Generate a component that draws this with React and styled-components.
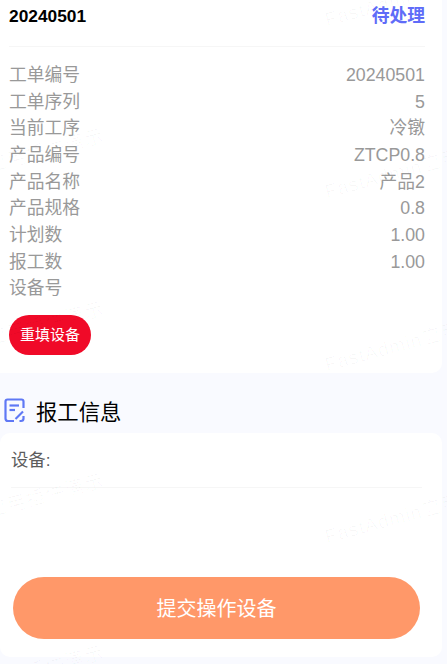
import React from 'react'
import styled, { createGlobalStyle } from 'styled-components'

const GlobalStyle = createGlobalStyle`
  html, body {
    margin: 0;
    padding: 0;
    background: #f9faff;
    overflow: hidden;
  }
  body {
    font-family: "Liberation Sans", "Noto Sans CJK SC", sans-serif;
  }
`

const rows = [
  ['工单编号', '20240501'],
  ['工单序列', '5'],
  ['当前工序', '冷镦'],
  ['产品编号', 'ZTCP0.8'],
  ['产品名称', '产品2'],
  ['产品规格', '0.8'],
  ['计划数', '1.00'],
  ['报工数', '1.00'],
  ['设备号', ''],
]

// watermark is repeated down the page, two columns
const marks = [0, 1, 2, 3, 4].flatMap((i) => [
  { text: 'FastAdmin应用插件演示', left: 328, top: 10 + i * 172.3 },
  { text: 'FastAdmin应用插件演示', left: -106, top: 10 + i * 172.3 },
])

export default function App() {
  return (
    <Page>
      <GlobalStyle />
      <InfoCard>
        <CardHeader>
          <OrderTitle>20240501</OrderTitle>
          <OrderStatus>待处理</OrderStatus>
        </CardHeader>
        <InfoList>
          {rows.map(([label, value]) => (
            <InfoRow key={label}>
              <span>{label}</span>
              <span>{value}</span>
            </InfoRow>
          ))}
        </InfoList>
        <ResetButton>重填设备</ResetButton>
      </InfoCard>

      <SectionHead>
        <svg width="21" height="25" viewBox="0 0 21 25" fill="none" stroke="#5f78f5" strokeWidth="2.2">
          <path d="M10 23H4Q1.500 23 1.500 20.500V3.500Q1.500 1.500 3.500 1.500H17.500Q19.500 1.500 19.500 3.500V10" />
          <path d="M19.500 18V20.500Q19.500 23 17 23H15.500" />
          <path d="M5.500 7.500H15" />
          <path d="M5.500 12H11" />
          <path d="M11.500 21L19 13.500" />
        </svg>
        <SectionTitle>报工信息</SectionTitle>
      </SectionHead>

      <FormCard>
        <FieldRow>设备:</FieldRow>
        <SubmitButton>提交操作设备</SubmitButton>
      </FormCard>

      <Watermarks>
        {marks.map((m) => (
          <Mark key={`${m.left}-${m.top}`} $left={m.left} $top={m.top}>{m.text}</Mark>
        ))}
      </Watermarks>
    </Page>
  )
}

//-----------------------------------------------style-----------------------------------------------//

const Page = styled.div`
  position: relative;
  width: 447px;
  height: 664px;
  overflow: hidden;
  background: #f9faff;
`

const InfoCard = styled.div`
  width: 442px;
  height: 373px;
  box-sizing: border-box;
  padding: 0 17px 0 9px;
  background: #fff;
  border-radius: 0 0 10px 0;
`

const CardHeader = styled.div`
  height: 46px;
  display: flex;
  justify-content: space-between;
  align-items: flex-start;
  border-bottom: 1px solid #f6f6f6;
`

const OrderTitle = styled.div`
  font-size: 17.33px;
  font-weight: 700;
  line-height: 32px;
  color: #000;
`

const OrderStatus = styled.div`
  font-size: 17.78px;
  font-weight: 700;
  line-height: 32px;
  color: #5f6cf8;
`

const InfoList = styled.div`
  margin-top: 15px;
`

const InfoRow = styled.div`
  display: flex;
  justify-content: space-between;
  height: 26.67px;
  font-size: 17.78px;
  line-height: 26.67px;
  color: #999;
`

const ResetButton = styled.div`
  width: 82px;
  height: 40px;
  margin-top: 13px;
  border-radius: 20px;
  background: #f00a28;
  color: #fff;
  font-size: 15px;
  line-height: 40px;
  text-align: center;
`

const SectionHead = styled.div`
  height: 60px;
  box-sizing: border-box;
  padding: 15px 0 0 4px;
  display: flex;
  align-items: center;
  gap: 11px;
`

const SectionTitle = styled.div`
  font-size: 21.33px;
  color: #000;
`

const FormCard = styled.div`
  width: 442px;
  height: 224px;
  box-sizing: border-box;
  padding: 0 20px 0 11px;
  background: #fff;
  border-radius: 10px;
  display: flex;
  flex-direction: column;
`

const FieldRow = styled.div`
  height: 55px;
  box-sizing: border-box;
  font-size: 17.33px;
  line-height: 54px;
  color: #5c5c5c;
  border-bottom: 1px solid #f6f6f6;
`

const SubmitButton = styled.div`
  width: 407px;
  height: 62px;
  margin: 89px 0 0 2px;
  border-radius: 31px;
  background: #ff9869;
  color: #fff;
  font-size: 20px;
  line-height: 64px;
  text-align: center;
`

const Watermarks = styled.div`
  position: absolute;
  inset: 0;
  pointer-events: none;
`

const Mark = styled.div`
  position: absolute;
  left: ${(p) => p.$left}px;
  top: ${(p) => p.$top}px;
  height: 20px;
  transform: rotate(-15deg);
  transform-origin: left bottom;
  white-space: nowrap;
  font-size: 19px;
  line-height: 20px;
  letter-spacing: 1px;
  color: rgba(0, 0, 0, 0.028);
`
